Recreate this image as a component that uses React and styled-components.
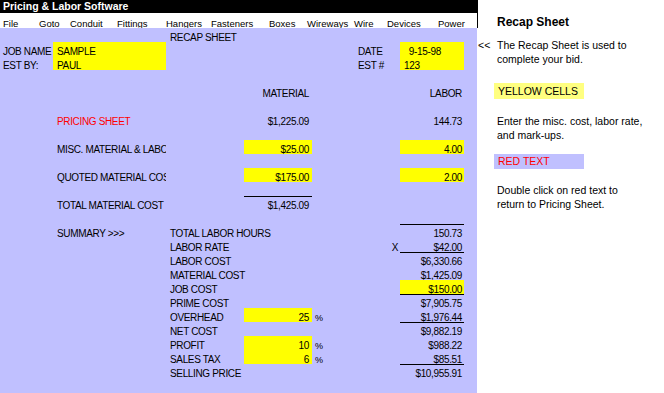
import React from 'react';
import styled, { createGlobalStyle } from 'styled-components';

const GlobalStyle = createGlobalStyle`
  html, body {
    margin: 0;
    padding: 0;
    background: #fff;
  }
  body {
    width: 664px;
    height: 393px;
    overflow: hidden;
  }
`;

const COLS = '53px 113px 78px 68px 42px 46px 64px 13px';

const Screen = styled.div`
  display: flex;
  width: 664px;
  height: 393px;
`;

const Workbook = styled.div`
  width: 478px;
  flex: none;
  display: flex;
  flex-direction: column;
`;

const TitleBar = styled.div`
  height: 13px;
  box-sizing: border-box;
  padding: 0 3px;
  background: #000;
  color: #fff;
  font: bold 10.5px/13px "Liberation Sans", Arial, sans-serif;
  white-space: nowrap;
`;

const MenuBar = styled.div`
  display: flex;
  height: 15px;
  box-sizing: border-box;
  padding: 6px 0 0 3px;
  background: #fff;
  border-right: 1px solid #000;
  font: 9.5px/10px "Liberation Sans", Arial, sans-serif;
  color: #000;
`;

const MenuItem = styled.span`
  flex: none;
  width: ${p => p.$w}px;
  white-space: nowrap;
`;

const Sheet = styled.div`
  flex: 1;
  width: 477px;
  background: #c0c0ff;
  font-family: "Liberation Sans", Arial, sans-serif;
  font-size: 10px;
  letter-spacing: -0.35px;
  color: #000;
`;

const Row = styled.div`
  display: grid;
  grid-template-columns: ${COLS};
  height: 14px;
`;

const Cell = styled.div`
  grid-column: ${p => p.$col};
  grid-row: 1;
  box-sizing: border-box;
  height: 14px;
  padding: 3px ${p => p.$pr ?? 3}px 0 ${p => p.$pl ?? 4}px;
  line-height: 14px;
  white-space: pre;
  text-align: ${p => p.$align || 'left'};
  background: ${p => (p.$fill ? '#ffff00' : 'transparent')};
  box-shadow: ${p => (p.$rule ? 'inset 0 1px 0 #000' : 'none')};
  color: ${p => (p.$red ? '#ff0000' : '#000')};
  font-size: ${p => (p.$small ? '9px' : 'inherit')};
  overflow-x: ${p => (p.$clip ? 'clip' : 'visible')};
`;

const Notes = styled.div`
  flex: 1;
  padding: 15px 0 0 19px;
  font: 10.5px/14px "Liberation Sans", Arial, sans-serif;
  color: #000;
  white-space: nowrap;
`;

const NotesTitle = styled.div`
  font-weight: bold;
  font-size: 12px;
`;

const Para = styled.div`
  margin-top: ${p => p.$mt}px;
`;

const PointerPara = styled(Para)`
  display: flex;
  margin-left: -19px;
`;

const Marker = styled.span`
  width: 19px;
  flex: none;
`;

const Swatch = styled.div`
  width: 90px;
  height: ${p => p.$h}px;
  line-height: ${p => p.$h}px;
  margin: ${p => p.$mt}px 0 0 -3px;
  padding-left: 4px;
  box-sizing: border-box;
  background: ${p => p.$bg};
  color: ${p => p.$color};
`;

const menu = [
  ['File', 36], ['Goto', 31], ['Conduit', 47], ['Fittings', 49], ['Hangers', 45],
  ['Fasteners', 58], ['Boxes', 38], ['Wireways', 47], ['Wire', 33], ['Devices', 51], ['Power', 40],
];

// columns: 1 A, 2 B, 3 C, 4 D, 5 E1, 6 E2, 7 F, 8 G
const num = (col, text, extra = {}) => ({ col, text, align: 'right', pr: col === 4 ? 3 : 2, ...extra });

const rows = [
  [{ col: 3, text: 'RECAP SHEET' }],
  [{ col: 1, text: 'JOB NAME', pl: 3 }, { col: 2, text: 'SAMPLE', fill: true }, { col: 6, text: 'DATE' }, { col: 7, text: '  9-15-98', fill: true }],
  [{ col: 1, text: 'EST BY:', pl: 3 }, { col: 2, text: 'PAUL', fill: true }, { col: 6, text: 'EST #' }, { col: 7, text: '123', fill: true }],
  [],
  [num(4, 'MATERIAL'), num(7, 'LABOR')],
  [],
  [{ col: 2, text: 'PRICING SHEET', red: true }, num(4, '$1,225.09'), num(7, '144.73')],
  [],
  [{ col: 2, text: 'MISC. MATERIAL & LABOR', clip: true }, num(4, '$25.00', { fill: true }), num(7, '4.00', { fill: true })],
  [],
  [{ col: 2, text: 'QUOTED MATERIAL COST', clip: true }, num(4, '$175.00', { fill: true }), num(7, '2.00', { fill: true })],
  [],
  [{ col: 2, text: 'TOTAL MATERIAL COST' }, num(4, '$1,425.09', { rule: true })],
  [],
  [{ col: 2, text: 'SUMMARY >>>' }, { col: 3, text: 'TOTAL LABOR HOURS' }, num(7, '150.73', { rule: true })],
  [{ col: 3, text: 'LABOR RATE' }, num(6, 'X'), num(7, '$42.00')],
  [{ col: 3, text: 'LABOR COST' }, num(7, '$6,330.66', { rule: true })],
  [{ col: 3, text: 'MATERIAL COST' }, num(7, '$1,425.09')],
  [{ col: 3, text: 'JOB COST' }, num(7, '$150.00', { fill: true })],
  [{ col: 3, text: 'PRIME COST' }, num(7, '$7,905.75', { rule: true })],
  [{ col: 3, text: 'OVERHEAD' }, num(4, '25', { fill: true }), { col: 5, text: '%', pl: 3, small: true }, num(7, '$1,976.44')],
  [{ col: 3, text: 'NET COST' }, num(7, '$9,882.19', { rule: true })],
  [{ col: 3, text: 'PROFIT' }, num(4, '10', { fill: true }), { col: 5, text: '%', pl: 3, small: true }, num(7, '$988.22')],
  [{ col: 3, text: 'SALES TAX' }, num(4, '6', { fill: true }), { col: 5, text: '%', pl: 3, small: true }, num(7, '$85.51')],
  [{ col: 3, text: 'SELLING PRICE' }, num(7, '$10,955.91', { rule: true })],
  [],
];

export default function App() {
  return (
    <Screen>
      <GlobalStyle />
      <Workbook>
        <TitleBar>Pricing &amp; Labor Software</TitleBar>
        <MenuBar>
          {menu.map(([label, w]) => (
            <MenuItem key={label} $w={w}>{label}</MenuItem>
          ))}
        </MenuBar>
        <Sheet>
          {rows.map((cells, i) => (
            <Row key={i}>
              {cells.map(c => (
                <Cell
                  key={c.col}
                  $col={c.col}
                  $align={c.align}
                  $pl={c.pl}
                  $pr={c.pr}
                  $fill={c.fill}
                  $rule={c.rule}
                  $red={c.red}
                  $clip={c.clip}
                  $small={c.small}
                >
                  {c.text}
                </Cell>
              ))}
            </Row>
          ))}
        </Sheet>
      </Workbook>
      <Notes>
        <NotesTitle>Recap Sheet</NotesTitle>
        <PointerPara $mt={9}>
          <Marker>&lt;&lt;</Marker>
          <span>The Recap Sheet is used to<br />complete your bid.</span>
        </PointerPara>
        <Swatch $mt={17} $h={16} $bg="#ffff80" $color="#000">YELLOW CELLS</Swatch>
        <Para $mt={15}>Enter the misc. cost, labor rate,<br />and mark-ups.</Para>
        <Swatch $mt={12} $h={15} $bg="#c0c0ff" $color="#ff0000">RED TEXT</Swatch>
        <Para $mt={14}>Double click on red text to<br />return to Pricing Sheet.</Para>
      </Notes>
    </Screen>
  );
}
